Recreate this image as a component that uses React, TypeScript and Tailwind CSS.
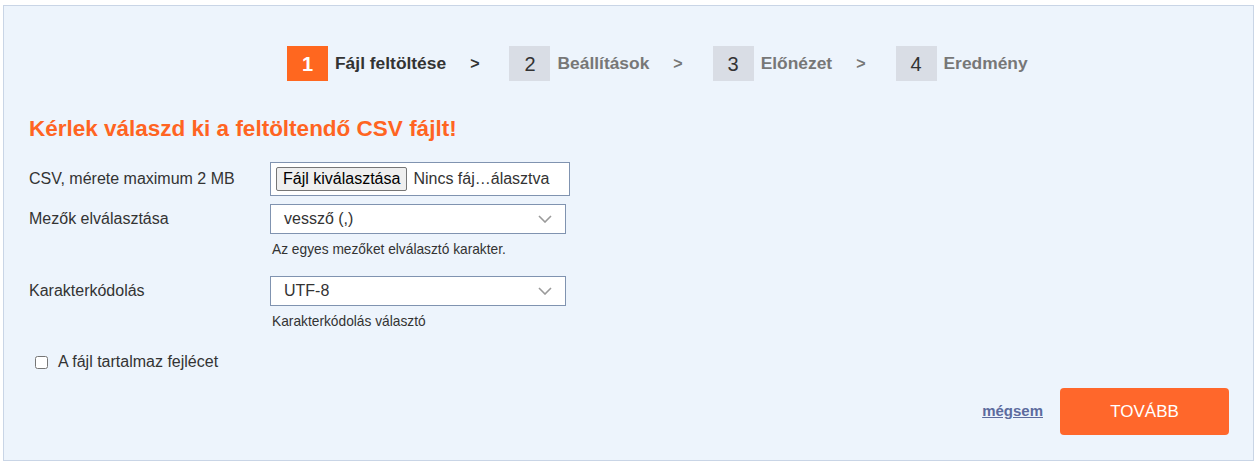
import { useState } from 'react';

const steps = [
  { n: 1, label: 'Fájl feltöltése' },
  { n: 2, label: 'Beállítások' },
  { n: 3, label: 'Előnézet' },
  { n: 4, label: 'Eredmény' },
];

const Chevron = () => (
  <svg width="14" height="8" viewBox="0 0 14 8" className="shrink-0">
    <polyline points="1,1 7,7 13,1" fill="none" stroke="#9a9a9a" strokeWidth="1.6" />
  </svg>
);

const StepBar = ({ active }: { active: number }) => (
  <div className="flex items-center pl-[258px]">
    {steps.map((step, i) => {
      const isActive = step.n === active;
      return (
        <div key={step.n} className="flex items-center">
          <div
            className={`flex h-[35px] w-[41px] items-center justify-center text-[20px] ${
              isActive ? 'bg-[#ff671f] font-bold text-white' : 'bg-[#d9dde5] text-[#333]'
            }`}
          >
            {step.n}
          </div>
          <span
            className={`ml-[7px] text-[17.4px] font-bold ${isActive ? 'text-[#333]' : 'text-[#777]'}`}
          >
            {step.label}
          </span>
          {i < steps.length - 1 && (
            <span
              className={`ml-[24px] mr-[30px] text-[16px] font-bold ${
                isActive ? 'text-[#333]' : 'text-[#777]'
              }`}
            >
              &gt;
            </span>
          )}
        </div>
      );
    })}
  </div>
);

const SelectBox = ({ value }: { value: string }) => (
  <div className="flex h-[30px] w-[296px] items-center justify-between border border-[#8093b0] bg-white pl-[13px] pr-[13px] text-[16px] text-[#333]">
    <span>{value}</span>
    <Chevron />
  </div>
);

export default function App() {
  const [hasHeader, setHasHeader] = useState(false);

  return (
    <div className="min-h-screen bg-white pl-[3px] pt-[5px] font-['Liberation_Sans',Arial,sans-serif]">
      <div className="w-[1251px] border border-[#c9d5e6] bg-[#edf4fc] pb-[25px] pl-[25px] pr-[24px] pt-[40px]">
        <StepBar active={1} />

        <h1 className="mt-[36px] text-[22.5px] leading-[24px] font-bold text-[#ff6422]">
          Kérlek válaszd ki a feltöltendő CSV fájlt!
        </h1>

        <div className="mt-[21px] flex items-center">
          <label className="w-[241px] text-[16px] text-[#333]">CSV, mérete maximum 2 MB</label>
          <div className="flex h-[34px] w-[300px] items-center border border-[#8093b0] bg-white pl-[5px] text-[16px]">
            <span className="flex h-[24px] items-center rounded-[2px] border border-[#767676] bg-[#efefef] px-[6px] text-black">
              Fájl kiválasztása
            </span>
            <span className="ml-[6px] text-[#333]">Nincs fáj…álasztva</span>
          </div>
        </div>

        <div className="mt-[8px] flex items-center">
          <label className="w-[241px] text-[16px] text-[#333]">Mezők elválasztása</label>
          <SelectBox value="vessző (,)" />
        </div>
        <p className="mt-[8px] ml-[243px] text-[13.75px] leading-[16px] text-[#333]">
          Az egyes mezőket elválasztó karakter.
        </p>

        <div className="mt-[18px] flex items-center">
          <label className="w-[241px] text-[16px] text-[#333]">Karakterkódolás</label>
          <SelectBox value="UTF-8" />
        </div>
        <p className="mt-[8px] ml-[243px] text-[13.75px] leading-[16px] text-[#333]">
          Karakterkódolás választó
        </p>

        <label className="mt-[22px] ml-[6px] flex h-[20px] items-center text-[16px] text-[#333]">
          <input
            type="checkbox"
            checked={hasHeader}
            onChange={(e) => setHasHeader(e.target.checked)}
            className="m-0 h-[13px] w-[13px]"
          />
          <span className="ml-[10px]">A fájl tartalmaz fejlécet</span>
        </label>

        <div className="mt-[16px] flex items-center justify-end">
          <a href="#" className="text-[15px] font-bold text-[#5c6b9e] underline">
            mégsem
          </a>
          <button className="ml-[17px] h-[47px] w-[169px] rounded-[4px] bg-[#ff672b] text-[17px] text-white">
            TOVÁBB
          </button>
        </div>
      </div>
    </div>
  );
}
